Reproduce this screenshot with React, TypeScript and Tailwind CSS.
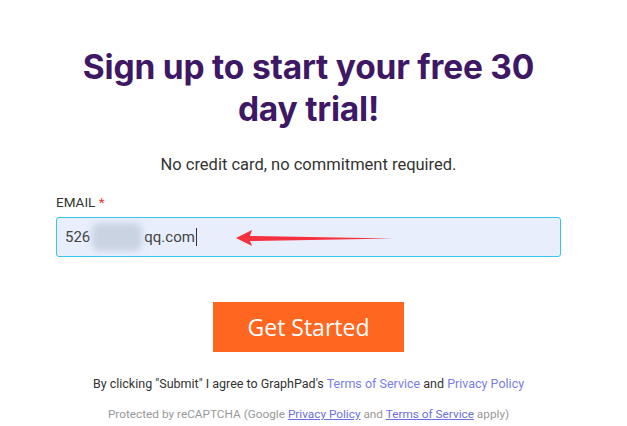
export default function App() {
  return (
    <div className="min-h-[426px] w-full bg-white font-['Roboto',sans-serif]">
      <div className="ml-[56px] flex w-[505px] flex-col pt-[46px]">
        <h1 className="text-center font-['Inter',sans-serif] text-[33.5px] font-bold leading-[42px] tracking-[-0.2px] text-[#3e1765]">
          Sign up to start your free 30
          <br />
          day trial!
        </h1>

        <p className="mt-[24px] text-center text-[16.5px] leading-[22px] text-[#333]">
          No credit card, no commitment required.
        </p>

        <label className="mt-[17px] text-[13.5px] leading-[18px] text-[#333]">
          EMAIL <span className="text-[#e53935]">*</span>
        </label>

        {/* email input with screenshot annotation */}
        <div className="relative mt-[6px] flex h-[40px] items-center rounded-[3px] border border-[#36c6ec] bg-[#e8eefc] pl-[8px] text-[15px] text-[#444]">
          <span>526</span>
          <span className="mx-[2px] h-[28px] w-[50px] rounded-[8px] bg-[#c9d3e2] blur-[3px]" />
          <span>qq.com</span>
          <span className="ml-[1px] h-[18px] w-px bg-[#333]" />
          <svg className="absolute left-[178px] top-[10px]" width="160" height="20" viewBox="0 0 160 20">
            <path d="M1 10 L17 2 L15 8 L158 10.5 L15 13 L17 18 Z" fill="#f5303f" />
          </svg>
        </div>

        <button className="mx-auto mt-[45px] h-[50px] w-[191px] bg-[#ff6620] font-['Open_Sans',sans-serif] text-[23px] text-white">
          Get Started
        </button>

        <p className="mt-[24px] text-center text-[12.5px] leading-[16px] text-[#333]">
          By clicking "Submit" I agree to GraphPad's{" "}
          <a className="text-[#7b7ee8]">Terms of Service</a> and{" "}
          <a className="text-[#7b7ee8]">Privacy Policy</a>
        </p>

        <p className="mt-[14px] text-center text-[11.8px] leading-[16px] text-[#999]">
          Protected by reCAPTCHA (Google{" "}
          <a className="text-[#6b6fe0] underline">Privacy Policy</a> and{" "}
          <a className="text-[#6b6fe0] underline">Terms of Service</a> apply)
        </p>
      </div>
    </div>
  );
}
